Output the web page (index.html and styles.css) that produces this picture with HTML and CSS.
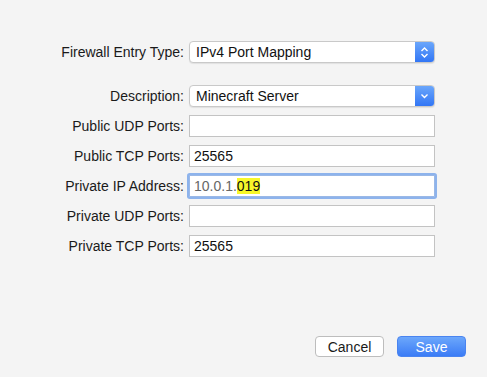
FILE: index.html
```html
<!DOCTYPE html>
<html lang="en">
<head>
    <meta charset="UTF-8">
    <title>Firewall Entry</title>
    <link rel="stylesheet" href="styles.css">
</head>
<body>
    <div class="sheet">
        <div class="form">
            <label class="label">Firewall Entry Type:</label>
            <div class="popup">
                <span class="popup-text">IPv4 Port Mapping</span>
                <span class="popup-arrow">
                    <svg width="9" height="13" viewBox="0 0 9 13"><path d="M1.5 5 L4.5 2 L7.5 5 M1.5 8 L4.5 11 L7.5 8" fill="none" stroke="#fff" stroke-width="1.4"/></svg>
                </span>
            </div>

            <label class="label spaced">Description:</label>
            <div class="popup spaced">
                <span class="popup-text">Minecraft Server</span>
                <span class="popup-arrow">
                    <svg width="9" height="8" viewBox="0 0 9 8"><path d="M1.5 2.5 L4.5 5.5 L7.5 2.5" fill="none" stroke="#fff" stroke-width="1.4"/></svg>
                </span>
            </div>

            <label class="label">Public UDP Ports:</label>
            <div class="field"></div>

            <label class="label">Public TCP Ports:</label>
            <div class="field">25565</div>

            <label class="label">Private IP Address:</label>
            <div class="field focused"><span class="dim">10.0.1.</span><span class="mark">019</span></div>

            <label class="label">Private UDP Ports:</label>
            <div class="field"></div>

            <label class="label">Private TCP Ports:</label>
            <div class="field">25565</div>
        </div>

        <div class="buttons">
            <button class="btn">Cancel</button>
            <button class="btn primary">Save</button>
        </div>
    </div>
</body>
</html>
```

FILE: styles.css
```css
body {
    margin: 0;
    background-color: #f4f4f4;
    font-family: "Liberation Sans", Arial, sans-serif;
    font-size: 14px;
    color: #1a1a1a;
}

.sheet {
    height: 377px;
    display: flex;
    flex-direction: column;
}

.form {
    display: grid;
    grid-template-columns: 184px 246px;
    grid-template-rows: 22px 36px repeat(5, 22px);
    column-gap: 5px;
    row-gap: 8px;
    padding-top: 41px;
    align-items: center;
}

.label {
    text-align: right;
}

.spaced {
    align-self: end;
    line-height: 22px;
}

.popup {
    height: 22px;
    box-sizing: border-box;
    display: flex;
    align-items: center;
    background-color: white;
    border: 1px solid #c9c9c9;
    border-radius: 4px;
    box-shadow: 0 1px 1px rgba(0, 0, 0, 0.08);
    overflow: hidden;
}

.popup-text {
    flex: 1;
    padding-left: 6px;
    color: #111;
}

.popup-arrow {
    width: 19px;
    height: 100%;
    display: flex;
    align-items: center;
    justify-content: center;
    background: linear-gradient(#6aa6fb, #3276f5);
}

.field {
    height: 22px;
    box-sizing: border-box;
    background-color: white;
    border: 1px solid #c3c3c3;
    padding: 2px 4px 0;
    line-height: 16px;
    color: #111;
}

.focused {
    box-shadow: 0 0 0 2px #8db3ec;
    border-color: #9ab8e6;
    border-radius: 1px;
}

.dim {
    color: #666;
}

.mark {
    background-color: #f7f72a;
    color: #111;
}

.buttons {
    margin-top: auto;
    display: flex;
    justify-content: flex-end;
    gap: 13px;
    padding: 0 21px 20px 0;
}

.btn {
    width: 69px;
    height: 21px;
    font-family: "Liberation Sans", Arial, sans-serif;
    font-size: 14px;
    color: #1a1a1a;
    background-color: white;
    border: 1px solid #bdbdbd;
    border-radius: 4px;
    padding: 0;
}

.primary {
    color: white;
    border-color: #4a84f0;
    background: linear-gradient(#6ca7fb, #3b7cf6);
}
```
